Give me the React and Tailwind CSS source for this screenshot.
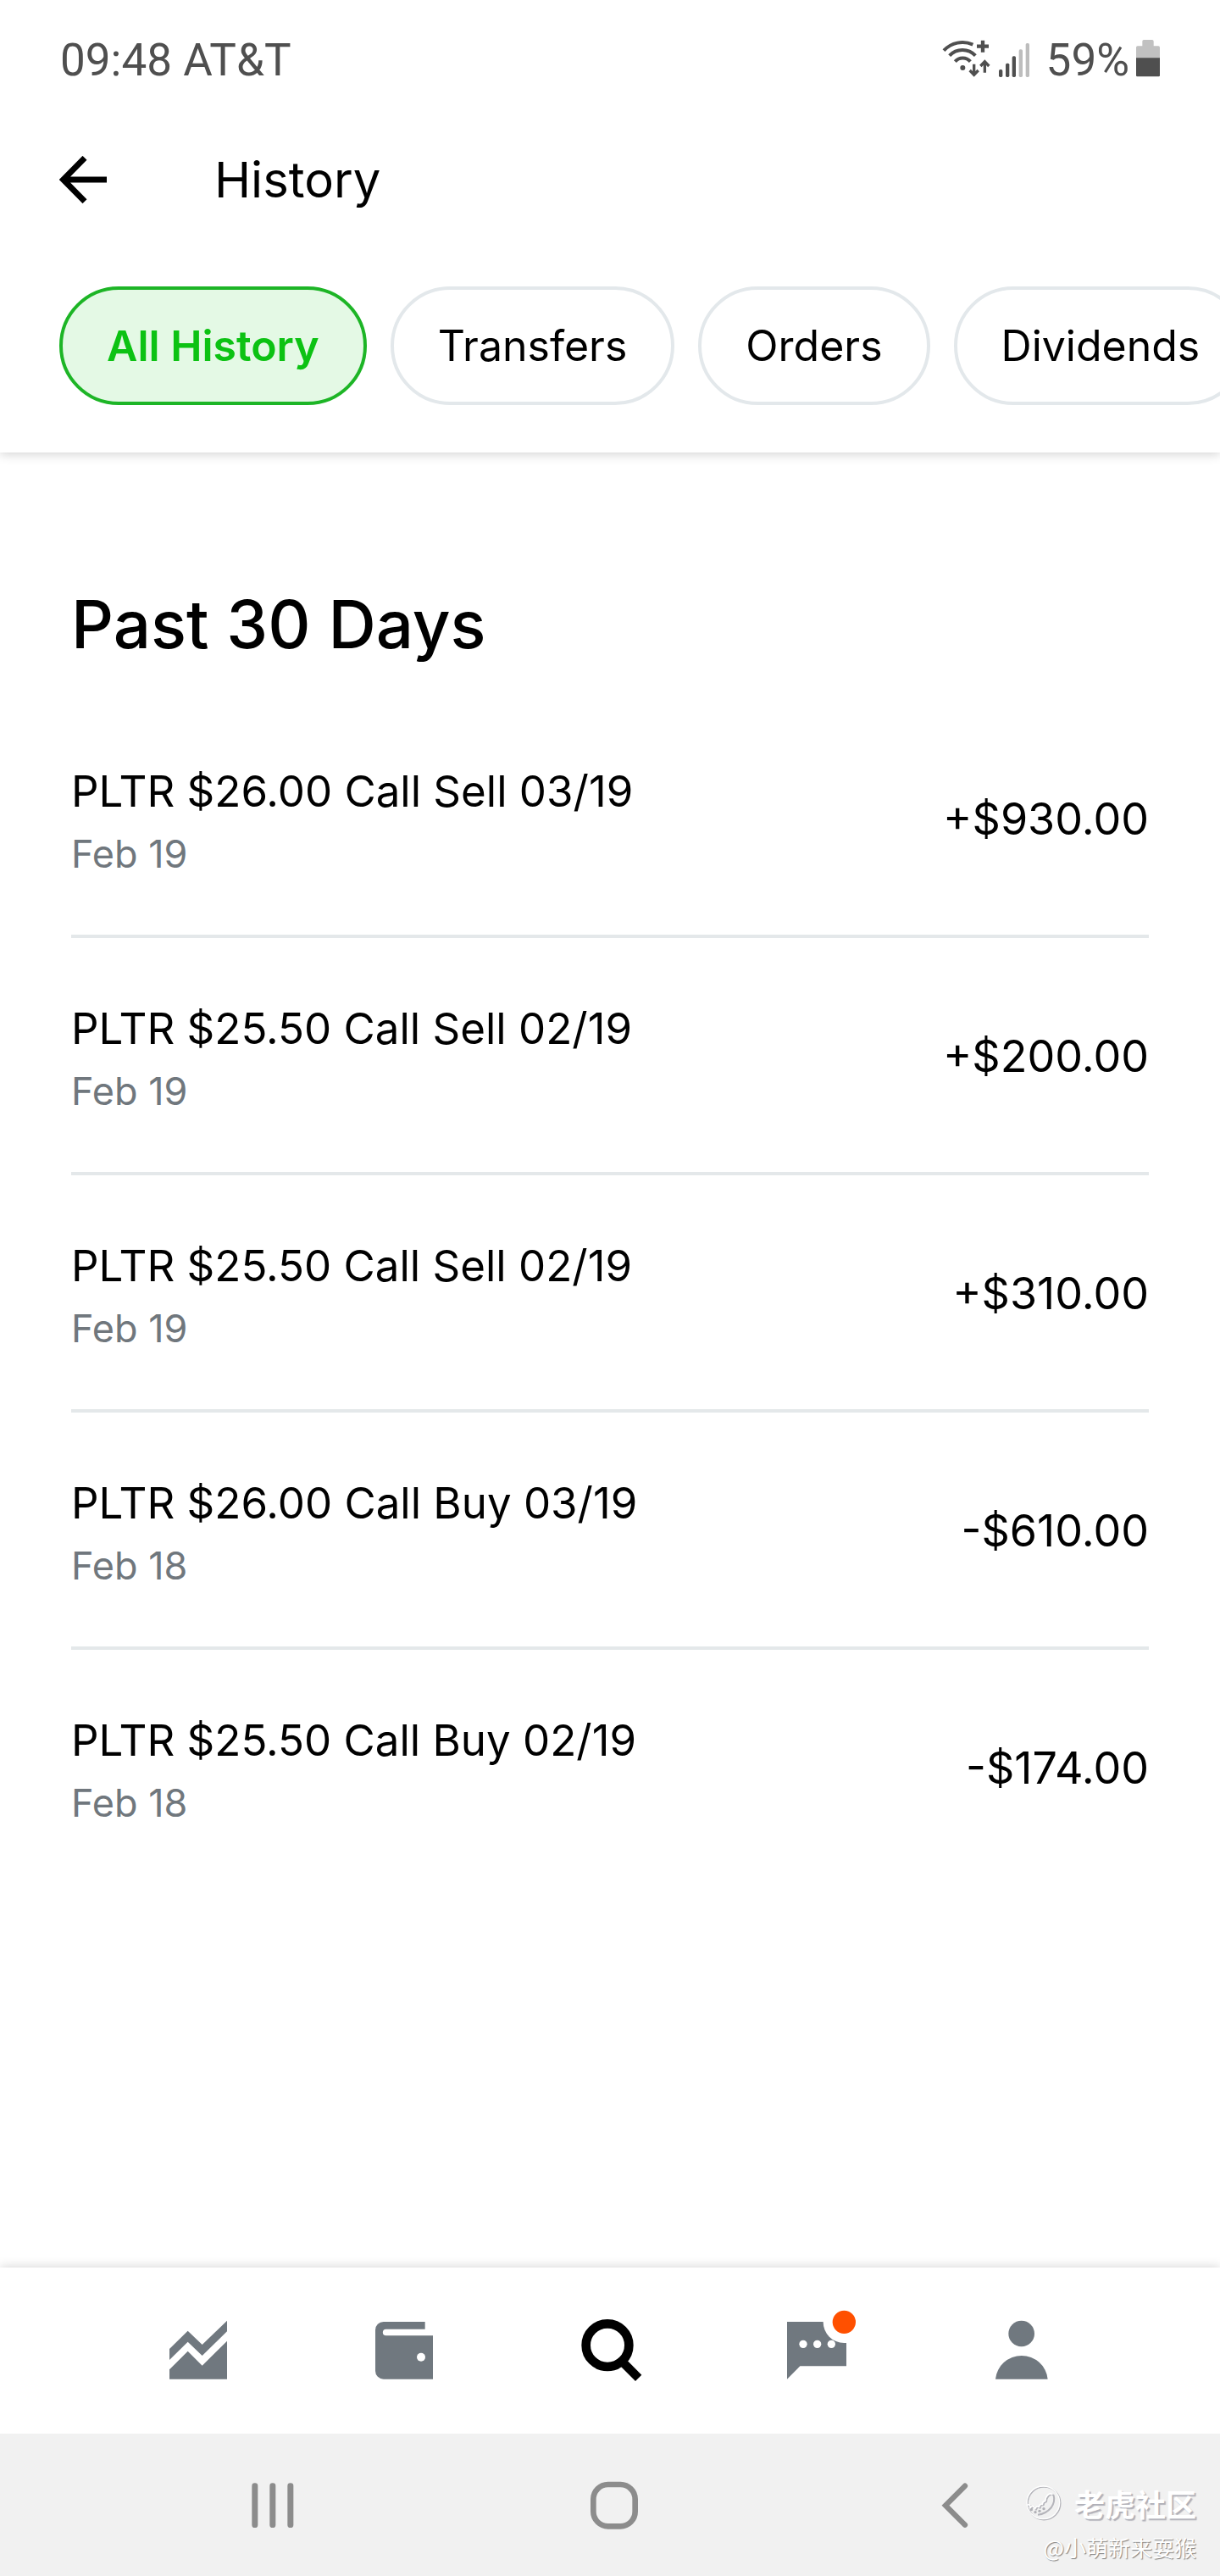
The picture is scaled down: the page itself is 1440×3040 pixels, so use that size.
import React, { useState } from "react";

const TABS = ["All History", "Transfers", "Orders", "Dividends"];

const ORDERS = [
  { id: 1, title: "PLTR $26.00 Call Sell 03/19", date: "Feb 19", amount: "+$930.00" },
  { id: 2, title: "PLTR $25.50 Call Sell 02/19", date: "Feb 19", amount: "+$200.00" },
  { id: 3, title: "PLTR $25.50 Call Sell 02/19", date: "Feb 19", amount: "+$310.00" },
  { id: 4, title: "PLTR $26.00 Call Buy 03/19", date: "Feb 18", amount: "-$610.00" },
  { id: 5, title: "PLTR $25.50 Call Buy 02/19", date: "Feb 18", amount: "-$174.00" },
];

function WifiIcon() {
  return (
    <svg className="h-11 w-[57px]" viewBox="36 30 171 132" fill="none" stroke="currentColor" aria-hidden="true">
      <g strokeWidth="12">
        <path d="M42 68A90 90 0 0 1 145 47" />
        <path d="M62 86A63 63 0 0 1 154 86" />
        <path d="M82 107A36 36 0 0 1 136 107" />
      </g>
      <circle cx="109" cy="129" r="9" fill="currentColor" stroke="none" />
      <path d="M180 32v42M159 53h42" strokeWidth="13" />
      <path d="M149 116v38M134 138l15 16 15-16M187 146v-38M172 123l15-16 15 16" strokeWidth="10" />
    </svg>
  );
}

function SignalIcon() {
  return (
    <svg className="h-10 w-9" viewBox="0 0 108 120" fill="currentColor" aria-hidden="true">
      <rect x="0" y="93" width="13" height="27" rx="5" />
      <rect x="24" y="71" width="13" height="49" rx="5" />
      <rect x="47" y="46" width="13" height="74" rx="5" />
      <rect x="71" y="22" width="13" height="98" rx="5" fill="#bdbdbd" />
      <rect x="95" y="0" width="13" height="120" rx="5" fill="#bdbdbd" />
    </svg>
  );
}

function BatteryIcon() {
  return (
    <svg className="h-11 w-7" viewBox="0 0 84 132" aria-hidden="true">
      <path d="M22 22V5q0-5 5-5h30q5 0 5 5v17h17q5 0 5 5v42H0V27q0-5 5-5z" fill="#c1c1c1" />
      <path d="M0 64h84v62q0 4-4 4H4q-4 0-4-4z" fill="currentColor" />
    </svg>
  );
}

function StatusBar() {
  return (
    <div className="flex items-center justify-between px-[71px] font-['Roboto',sans-serif] text-[53px] leading-16 text-[#4f4f4f]">
      <span>09:48 AT&amp;T</span>
      <div className="flex items-center">
        <div className="pb-1">
          <WifiIcon />
        </div>
        <div className="ml-2.5">
          <SignalIcon />
        </div>
        <span className="ml-5">59%</span>
        <div className="ml-2 pb-1">
          <BatteryIcon />
        </div>
      </div>
    </div>
  );
}

function FilterTabs() {
  const [active, setActive] = useState(TABS[0]);
  return (
    <div className="mt-[90px] flex gap-7 overflow-hidden pl-[70px]">
      {TABS.map((tab) => (
        <button
          key={tab}
          type="button"
          aria-pressed={tab === active}
          onClick={() => setActive(tab)}
          className={
            tab === active
              ? "h-[140px] shrink-0 rounded-full border-4 border-[#1db526] bg-[#e4f9e5] px-[52px] text-[50px] font-semibold text-[#0cc213]"
              : "h-[140px] shrink-0 rounded-full border-4 border-[#e3e8eb] bg-white px-[52px] text-[50px] text-black"
          }
        >
          {tab}
        </button>
      ))}
    </div>
  );
}

function HistoryRow({ title, date, amount }) {
  return (
    <li className="flex items-center justify-between border-b-4 border-[#e4e8ea] last:border-b-0">
      <div className="pt-[71px] pb-[63px]">
        <p className="text-[51px] leading-[72px]">{title}</p>
        <p className="mt-1.5 text-[45px] leading-16 text-[#70777d]">{date}</p>
      </div>
      <p className="pt-1 text-[52px] leading-[72px]">{amount}</p>
    </li>
  );
}

const NAV_ITEMS = [
  {
    label: "Investing",
    viewBox: "72 222 300 300",
    shape: (
      <path d="M120 366L185 302L236 351L324 266V304L236 390L185 341L120 405ZM120 439L185 374L236 425L324 338V473H120Z" />
    ),
  },
  {
    label: "Cash",
    viewBox: "801 222 300 300",
    shape: (
      <>
        <path d="M878 270H1025V296H887a11.500 11.500 0 0 0 0 23H1053V473H878a29 29 0 0 1-29-29V299a29 29 0 0 1 29-29z" />
        <circle cx="1011" cy="395" r="15" fill="#fff" />
      </>
    ),
  },
  {
    label: "Search",
    viewBox: "90 222 300 300",
    current: true,
    shape: (
      <g fill="none" stroke="currentColor">
        <circle cx="231" cy="353" r="76" strokeWidth="32" />
        <path d="M283 411L341 469" strokeWidth="31" />
      </g>
    ),
  },
  {
    label: "Messages",
    viewBox: "819 222 300 300",
    shape: (
      <>
        <path d="M867 270H995A74 74 0 0 0 1069 345H1077V427H913L867 473Z" />
        <g fill="#fff">
          <circle cx="924" cy="349" r="14" />
          <circle cx="974" cy="349" r="14" />
          <circle cx="1024" cy="349" r="14" />
        </g>
        <circle cx="1069" cy="271" r="41" fill="#ff5000" />
      </>
    ),
  },
  {
    label: "Account",
    viewBox: "348 222 300 300",
    shape: (
      <>
        <circle cx="497" cy="312" r="46" />
        <path d="M405 473A93 93 0 0 1 590 473Z" />
      </>
    ),
  },
];

function BottomNav() {
  return (
    <nav aria-label="Main" className="relative grid grid-cols-5 bg-white px-28 py-12 shadow-[0_-1px_12px_rgba(0,0,0,0.16)]">
      {NAV_ITEMS.map((item) => (
        <a
          key={item.label}
          href="#"
          aria-label={item.label}
          aria-current={item.current ? "page" : undefined}
          className={item.current ? "flex justify-center text-black" : "flex justify-center text-[#70787f]"}
        >
          <svg className="size-[100px]" viewBox={item.viewBox} fill="currentColor" aria-hidden="true">
            {item.shape}
          </svg>
        </a>
      ))}
    </nav>
  );
}

function CommunityLogo() {
  return (
    <svg className="size-11" viewBox="29 45 132 132" fill="none" strokeLinejoin="round" aria-hidden="true">
      <g stroke="#b4b4ba">
        <circle cx="96" cy="112" r="58" strokeWidth="5" />
        <path
          d="M42 120q10-2 10 10q8-12 16 4q4-12 14-6q2-12 12-10q0-10 10-12q0-12 8-20q10-10 18-2q6 20-8 42q-20 24-48 26"
          strokeWidth="6"
        />
      </g>
      <g fill="#b0b0b6">
        <circle cx="51" cy="134" r="5" />
        <circle cx="65" cy="143" r="5" />
        <circle cx="80" cy="139" r="5" />
        <circle cx="95" cy="131" r="5" />
      </g>
      <g stroke="#fff">
        <circle cx="93" cy="109" r="58" strokeWidth="4" />
        <path
          d="M38 117q10-2 10 10q8-12 16 4q4-12 14-6q2-12 12-10q0-10 10-12q0-12 8-20q10-10 18-2"
          strokeWidth="5"
        />
      </g>
    </svg>
  );
}

function SystemNav() {
  return (
    <div className="relative grid grid-cols-3 bg-[#f1f1f1] py-[54px] pr-[111px] pl-[121px] text-[#8c8c8c]">
      <button type="button" aria-label="Recent apps" className="flex justify-center">
        <svg className="size-[60px]" viewBox="0 0 180 180" fill="currentColor" aria-hidden="true">
          <rect x="16" y="13" width="21" height="158" rx="10" />
          <rect x="79" y="13" width="21" height="158" rx="10" />
          <rect x="142" y="13" width="21" height="158" rx="10" />
        </svg>
      </button>
      <button type="button" aria-label="Home" className="flex justify-center">
        <svg className="size-[60px]" viewBox="0 0 180 180" fill="none" stroke="currentColor" aria-hidden="true">
          <rect x="16" y="18" width="148" height="148" rx="52" strokeWidth="20" />
        </svg>
      </button>
      <button type="button" aria-label="Back" className="flex justify-center">
        <svg className="size-[60px]" viewBox="0 0 180 180" fill="none" stroke="currentColor" aria-hidden="true">
          <path d="M123 23L54 92L123 161" strokeWidth="19" strokeLinecap="round" />
        </svg>
      </button>
      <div className="absolute right-7 bottom-4 flex flex-col items-end font-['Noto_Sans_CJK_SC',sans-serif] text-white">
        <div className="flex items-center gap-3.5">
          <CommunityLogo />
          <span className="text-[36px] leading-11 font-bold [text-shadow:2px_2px_1px_#b0b0b8]">老虎社区</span>
        </div>
        <span className="mt-3 text-[26px] leading-9 [text-shadow:1px_1px_1px_#808080]">@小萌新来耍猴</span>
      </div>
    </div>
  );
}

export default function App() {
  return (
    <div className="flex min-h-screen flex-col bg-white font-['Inter',sans-serif] text-black">
      <header className="pt-[39px] pb-14 shadow-[0_2px_12px_rgba(0,0,0,0.18)]">
        <StatusBar />
        <div className="mt-[73px] flex items-center gap-[127px] pl-[70px]">
          <button type="button" aria-label="Back to account">
            <svg className="size-14" viewBox="0 0 168 168" fill="none" stroke="currentColor" strokeWidth="21" aria-hidden="true">
              <path d="M168 84H15M90 7L14 84L90 161" />
            </svg>
          </button>
          <h1 className="text-[58px] leading-[72px]">History</h1>
        </div>
        <FilterTabs />
      </header>
      <main className="grow px-[84px] pt-[155px]">
        <h2 className="mb-[42px] text-[78px] leading-24 font-medium">Past 30 Days</h2>
        <ul>
          {ORDERS.map((order) => (
            <HistoryRow key={order.id} {...order} />
          ))}
        </ul>
      </main>
      <BottomNav />
      <SystemNav />
    </div>
  );
}
